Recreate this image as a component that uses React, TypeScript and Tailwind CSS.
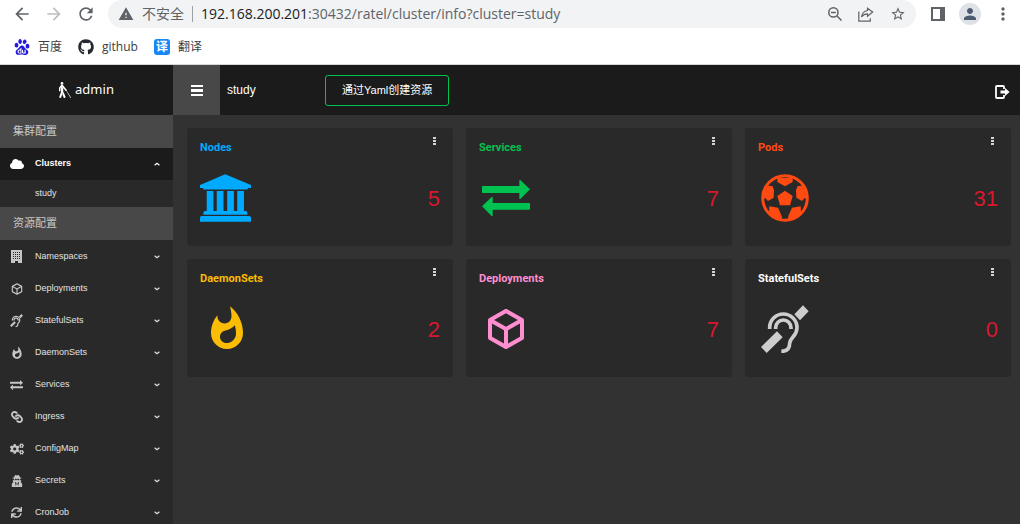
import type { ReactNode } from "react";
import {
  FaBlind,
  FaCloud,
  FaCogs,
  FaGithub,
  FaLink,
  FaSync,
  FaUserSecret,
} from "react-icons/fa";
import {
  MdArrowBack,
  MdArrowForward,
  MdMoreVert,
  MdPerson,
  MdRefresh,
  MdStarBorder,
  MdWarning,
  MdWhatshot,
} from "react-icons/md";
import { SiBaidu } from "react-icons/si";

type IconProps = { className?: string };

function BankIcon({ className }: IconProps) {
  return (
    <svg viewBox="0 0 152 142" className={className} fill="currentColor" aria-hidden="true">
      <path d="M75 0 152 32v9h-9c0 3-2 5-5 5H14c-3 0-5-2-5-5H0v-9z" />
      <path d="M20 50h20v60h10V50h20v60h11V50h20v60h10V50h20v60h5q5 0 5 5v6H10v-6q0-5 5-5h5z" />
      <path d="M5 125h142q5 0 5 5v12H0v-12q0-5 5-5z" />
    </svg>
  );
}

function ExchangeIcon({ className }: IconProps) {
  return (
    <svg viewBox="0 0 144 108" className={className} fill="currentColor" aria-hidden="true">
      <path d="M2 18h110V0l3 0 29 28-29 29h-3V39H2q-2 0-2-2V20q0-2 2-2z" />
      <path d="M142 69H32V51h-3L0 79l29 29h3V89h110q2 0 2-2V71q0-2-2-2z" />
    </svg>
  );
}

function SoccerIcon({ className }: IconProps) {
  return (
    <svg viewBox="0 0 144 144" className={className} fill="currentColor" aria-hidden="true">
      <circle cx="72" cy="72" r="67" fill="none" stroke="currentColor" strokeWidth="9" />
      <path d="M72 50 95 66 87 94H57L49 66z" />
      <path d="M49 12h46v12L72 37 49 24z" />
      <path d="M105 48l5-12 13-1 13 20 2 21-7-4-8 9-17-10z" />
      <path d="M39 48l-5-12-13-1L8 55 6 76l7-4 8 9 17-10z" />
      <path d="M82 126l11-25 26-4 1 16-16 18-23 5z" />
      <path d="M62 126 51 101l-26-4-1 16 16 18 23 5z" />
    </svg>
  );
}

function CubeIcon({ className }: IconProps) {
  return (
    <svg viewBox="0 0 24 24" className={className} fill="currentColor" aria-hidden="true">
      <path d="M21 16.5c0 .38-.21.71-.53.88l-7.9 4.44c-.16.12-.36.18-.57.18s-.41-.06-.57-.18l-7.9-4.44A.99.99 0 0 1 3 16.5v-9c0-.38.21-.71.53-.88l7.9-4.44c.16-.12.36-.18.57-.18s.41.06.57.18l7.9 4.44c.32.17.53.5.53.88v9M12 4.15 6.04 7.5 12 10.85l5.96-3.35L12 4.15M5 15.91l6 3.38v-6.71L5 9.21v6.7m14 0v-6.7l-6 3.37v6.71l6-3.38z" />
    </svg>
  );
}

function EarIcon({ className }: IconProps) {
  return (
    <svg viewBox="0 0 144 144" className={className} fill="none" stroke="currentColor" strokeWidth="11" aria-hidden="true">
      <path fill="currentColor" stroke="none" d="M126 1l17 18-26 27-17-18zM48 79l17 18-48 47L0 126z" />
      <path d="M26 72v-4a41 41 0 0 1 82 0c0 26-21 28-22 47 0 15-7 24-25 24" />
      <path d="M44 72v-4a23 23 0 0 1 46 0v4" />
    </svg>
  );
}

function BuildingIcon({ className }: IconProps) {
  return (
    <svg viewBox="0 0 11 13" className={className} fill="currentColor" aria-hidden="true">
      <path
        fillRule="evenodd"
        d="M0 0h11v13H7v-2H4v2H0zM2 2v1h1V2zm2 0v1h1V2zm2 0v1h1V2zm2 0v1h1V2zM2 4v1h1V4zm2 0v1h1V4zm2 0v1h1V4zm2 0v1h1V4zM2 6v1h1V6zm2 0v1h1V6zm2 0v1h1V6zm2 0v1h1V6zM2 8v1h1V8zm2 0v1h1V8zm2 0v1h1V8zm2 0v1h1V8z"
      />
    </svg>
  );
}

function ChevronIcon({ className }: IconProps) {
  return (
    <svg viewBox="0 0 6 4" className={className} fill="none" stroke="currentColor" strokeWidth="1.2" aria-hidden="true">
      <path d="M.6.7 3 2.8 5.4.7" />
    </svg>
  );
}

function DotsIcon({ className }: IconProps) {
  return (
    <svg viewBox="0 0 3 8" className={className} fill="currentColor" aria-hidden="true">
      <path d="M0 0h3v2H0zM0 3h3v2H0zM0 6h3v2H0z" />
    </svg>
  );
}

function ZoomOutIcon({ className }: IconProps) {
  return (
    <svg viewBox="0 0 14 14" className={className} fill="none" stroke="currentColor" strokeWidth="1.5" aria-hidden="true">
      <circle cx="5.4" cy="5.4" r="4.6" />
      <path d="M8.8 8.8l4.7 4.7M3 5.4h4.8" />
    </svg>
  );
}

function ShareIcon({ className }: IconProps) {
  return (
    <svg viewBox="0 0 16 15" className={className} fill="none" stroke="currentColor" strokeWidth="1.2" aria-hidden="true">
      <path d="M.8 4.5v9.7h11.5v-3" />
      <path d="M9.500 1.200 14.700 5 9.500 9.200V6.800C6.800 6.800 5 7.800 3.500 10 4 6.500 6 4 9.500 3.500z" />
    </svg>
  );
}

function PanelIcon({ className }: IconProps) {
  return (
    <svg viewBox="0 0 14 14" className={className} fill="currentColor" aria-hidden="true">
      <path fillRule="evenodd" d="M0 0h14v14H0zM2 2v10h7V2z" />
    </svg>
  );
}

function LogoutIcon({ className }: IconProps) {
  return (
    <svg viewBox="0 0 15 14" className={className} aria-hidden="true">
      <path d="M9 4V1.800Q9 1 8.200 1H1.800Q1 1 1 1.800v10.400q0 .8.8.8h6.400Q9 13 9 12.200V10" fill="none" stroke="currentColor" strokeWidth="1.8" />
      <path d="M5.500 5.600H10V3l4.600 4-4.600 4V8.500H5.500z" fill="currentColor" />
    </svg>
  );
}

type NavItem = { label: string; icon: ReactNode };

const navItems: NavItem[] = [
  { label: "Namespaces", icon: <BuildingIcon className="h-[13px] w-[11px]" /> },
  { label: "Deployments", icon: <CubeIcon className="size-[14px]" /> },
  { label: "StatefulSets", icon: <EarIcon className="size-[13px] stroke-[14]" /> },
  { label: "DaemonSets", icon: <MdWhatshot className="size-[14px]" /> },
  { label: "Services", icon: <ExchangeIcon className="h-[10px] w-[13px]" /> },
  { label: "Ingress", icon: <FaLink className="size-3 rotate-90" /> },
  { label: "ConfigMap", icon: <FaCogs className="size-[14px]" /> },
  { label: "Secrets", icon: <FaUserSecret className="size-3" /> },
  { label: "CronJob", icon: <FaSync className="size-[11px]" /> },
];

type Card = { title: string; count: number; color: string; iconColor: string; icon: ReactNode };

const cards: Card[] = [
  { title: "Nodes", count: 5, color: "text-[#00aaff]", iconColor: "text-[#00aaff]", icon: <BankIcon className="mr-[3px] h-12 w-[51px] shrink-0" /> },
  { title: "Services", count: 7, color: "text-[#00c250]", iconColor: "text-[#00c250]", icon: <ExchangeIcon className="h-9 w-12" /> },
  { title: "Pods", count: 31, color: "text-[#ff4a12]", iconColor: "text-[#ff4a12]", icon: <SoccerIcon className="size-12" /> },
  { title: "DaemonSets", count: 2, color: "text-[#fbbc05]", iconColor: "text-[#fbbc05]", icon: <MdWhatshot className="size-12" /> },
  { title: "Deployments", count: 7, color: "text-[#ff8ed0]", iconColor: "text-[#ff8ed0]", icon: <CubeIcon className="size-12" /> },
  { title: "StatefulSets", count: 0, color: "text-white", iconColor: "text-[#cdcdcd]", icon: <EarIcon className="size-12" /> },
];

function BrowserBar() {
  return (
    <div className="shrink-0 border-b border-[#d5d7da] bg-white font-['Open_Sans','Noto_Sans_CJK_SC',sans-serif] text-[#5f6368]">
      <div className="flex h-7 items-center">
        <div className="flex w-[108px] shrink-0 items-center gap-3 pl-3">
          <button aria-label="Back"><MdArrowBack className="size-5" /></button>
          <button aria-label="Forward" className="text-[#bcbec1]"><MdArrowForward className="size-5" /></button>
          <button aria-label="Reload"><MdRefresh className="size-5" /></button>
        </div>
        <div className="flex h-7 min-w-0 flex-1 items-center rounded-full bg-[#f1f3f4] px-2.5">
          <MdWarning className="mr-2 size-4 shrink-0" />
          <span className="shrink-0 text-sm">不安全</span>
          <span className="mx-2 h-4 w-px shrink-0 bg-[#9aa0a6]" />
          <span className="min-w-0 flex-1 truncate text-sm">
            <span className="text-[#202124]">192.168.200.201</span>:30432/ratel/cluster/info?cluster=study
          </span>
          <div className="flex shrink-0 items-center gap-4">
            <button aria-label="Zoom"><ZoomOutIcon className="size-[14px]" /></button>
            <button aria-label="Share"><ShareIcon className="h-[15px] w-4" /></button>
            <button aria-label="Bookmark"><MdStarBorder className="size-4" /></button>
          </div>
        </div>
        <div className="flex w-[104px] shrink-0 items-center gap-3 pl-[15px]">
          <button aria-label="Side panel"><PanelIcon className="size-[14px]" /></button>
          <button aria-label="Profile" className="ml-0.5 flex size-[22px] items-center justify-center rounded-full bg-[#dee1e6] text-[#4d5b70]">
            <MdPerson className="size-[18px]" />
          </button>
          <button aria-label="Menu"><MdMoreVert className="size-5" /></button>
        </div>
      </div>
      <nav aria-label="Bookmarks" className="flex h-9 items-center gap-4 pt-0.5 pl-[14px] text-xs text-[#3c4043]">
        <a href="#baidu" className="flex items-center gap-2">
          <SiBaidu className="size-4 text-[#2319dc]" />百度
        </a>
        <a href="#github" className="flex items-center gap-2">
          <FaGithub className="size-4 text-[#24292f]" />github
        </a>
        <a href="#translate" className="flex items-center gap-2">
          <span className="flex size-4 items-center justify-center rounded-[3px] bg-[#1687f5] text-xs font-bold text-white">译</span>翻译
        </a>
      </nav>
    </div>
  );
}

function SectionLabel({ children }: { children: ReactNode }) {
  return (
    <h2 className="flex h-[33px] items-center bg-[#484848] px-[13px] text-[11px] text-[#c8c8c8]">{children}</h2>
  );
}

function Sidebar() {
  return (
    <aside className="w-[173px] shrink-0 bg-[#292929] text-[9px] text-[#e2e2e2]">
      <div className="flex h-[50px] items-center justify-center gap-1 bg-[#1b1b1b] font-['Noto_Sans',sans-serif] text-[13px] text-white">
        <FaBlind className="h-4 w-3" />
        admin
      </div>
      <SectionLabel>集群配置</SectionLabel>
      <button className="flex h-8 w-full items-center bg-[#1b1b1b] pr-[13px] pl-2 text-left font-bold text-white">
        <span className="flex w-[27px] pl-0.5"><FaCloud className="size-[14px]" /></span>
        <span className="flex-1">Clusters</span>
        <ChevronIcon className="h-1 w-1.5 rotate-180" />
      </button>
      <a href="#study" className="flex h-[27px] items-center pl-[35px]">study</a>
      <SectionLabel>资源配置</SectionLabel>
      {navItems.map((item) => (
        <button key={item.label} className="flex h-8 w-full items-center pt-px pr-[13px] pl-2 text-left">
          <span className="mr-[10px] flex w-[17px] justify-center text-[#c6c6c6]">{item.icon}</span>
          <span className="flex-1">{item.label}</span>
          <ChevronIcon className="h-1 w-1.5" />
        </button>
      ))}
    </aside>
  );
}

function ResourceCard({ card }: { card: Card }) {
  return (
    <section className="flex h-[118px] flex-col rounded-[3px] bg-[#292929] px-[13px] pt-2">
      <div className="flex items-start justify-between pr-1">
        <h3 className={`pt-1 font-['Roboto',sans-serif] text-[11px] leading-4 font-bold ${card.color}`}>{card.title}</h3>
        <button aria-label={`${card.title} options`} className="pt-px text-[#d5d5d5]">
          <DotsIcon className="h-2 w-[3px]" />
        </button>
      </div>
      <div className="mt-[18px] flex items-center justify-between">
        <span className={`flex h-12 w-[54px] items-center justify-center ${card.iconColor}`}>{card.icon}</span>
        <span className="pt-0.5 text-[22px] leading-none text-[#d9182d]">{card.count}</span>
      </div>
    </section>
  );
}

export default function App() {
  return (
    <div className="flex h-screen flex-col overflow-hidden font-['Liberation_Sans','Noto_Sans_CJK_SC',sans-serif]">
      <BrowserBar />
      <div className="flex min-h-0 flex-1 bg-[#323232]">
        <Sidebar />
        <div className="min-w-0 flex-1">
          <header className="flex h-[50px] items-center bg-[#1b1b1b] text-white">
            <button aria-label="Toggle menu" className="flex h-full w-[47px] shrink-0 items-center justify-center bg-[#484848]">
              <svg viewBox="0 0 12 11" className="h-[11px] w-3" fill="currentColor" aria-hidden="true">
                <path d="M0 0h12v2H0zM0 4h12v3H0zM0 9h12v2H0z" />
              </svg>
            </button>
            <span className="w-[105px] pl-[7px] text-xs">study</span>
            <button className="h-[31px] rounded-[3px] border border-[#00c250] px-4 text-[11px]">通过Yaml创建资源</button>
            <button aria-label="Sign out" className="mr-[10px] ml-auto pt-1">
              <LogoutIcon className="h-[14px] w-[15px]" />
            </button>
          </header>
          <main className="grid grid-cols-3 gap-[13px] pt-[13px] pr-[9px] pl-[14px]">
            {cards.map((card) => (
              <ResourceCard key={card.title} card={card} />
            ))}
          </main>
        </div>
      </div>
    </div>
  );
}
